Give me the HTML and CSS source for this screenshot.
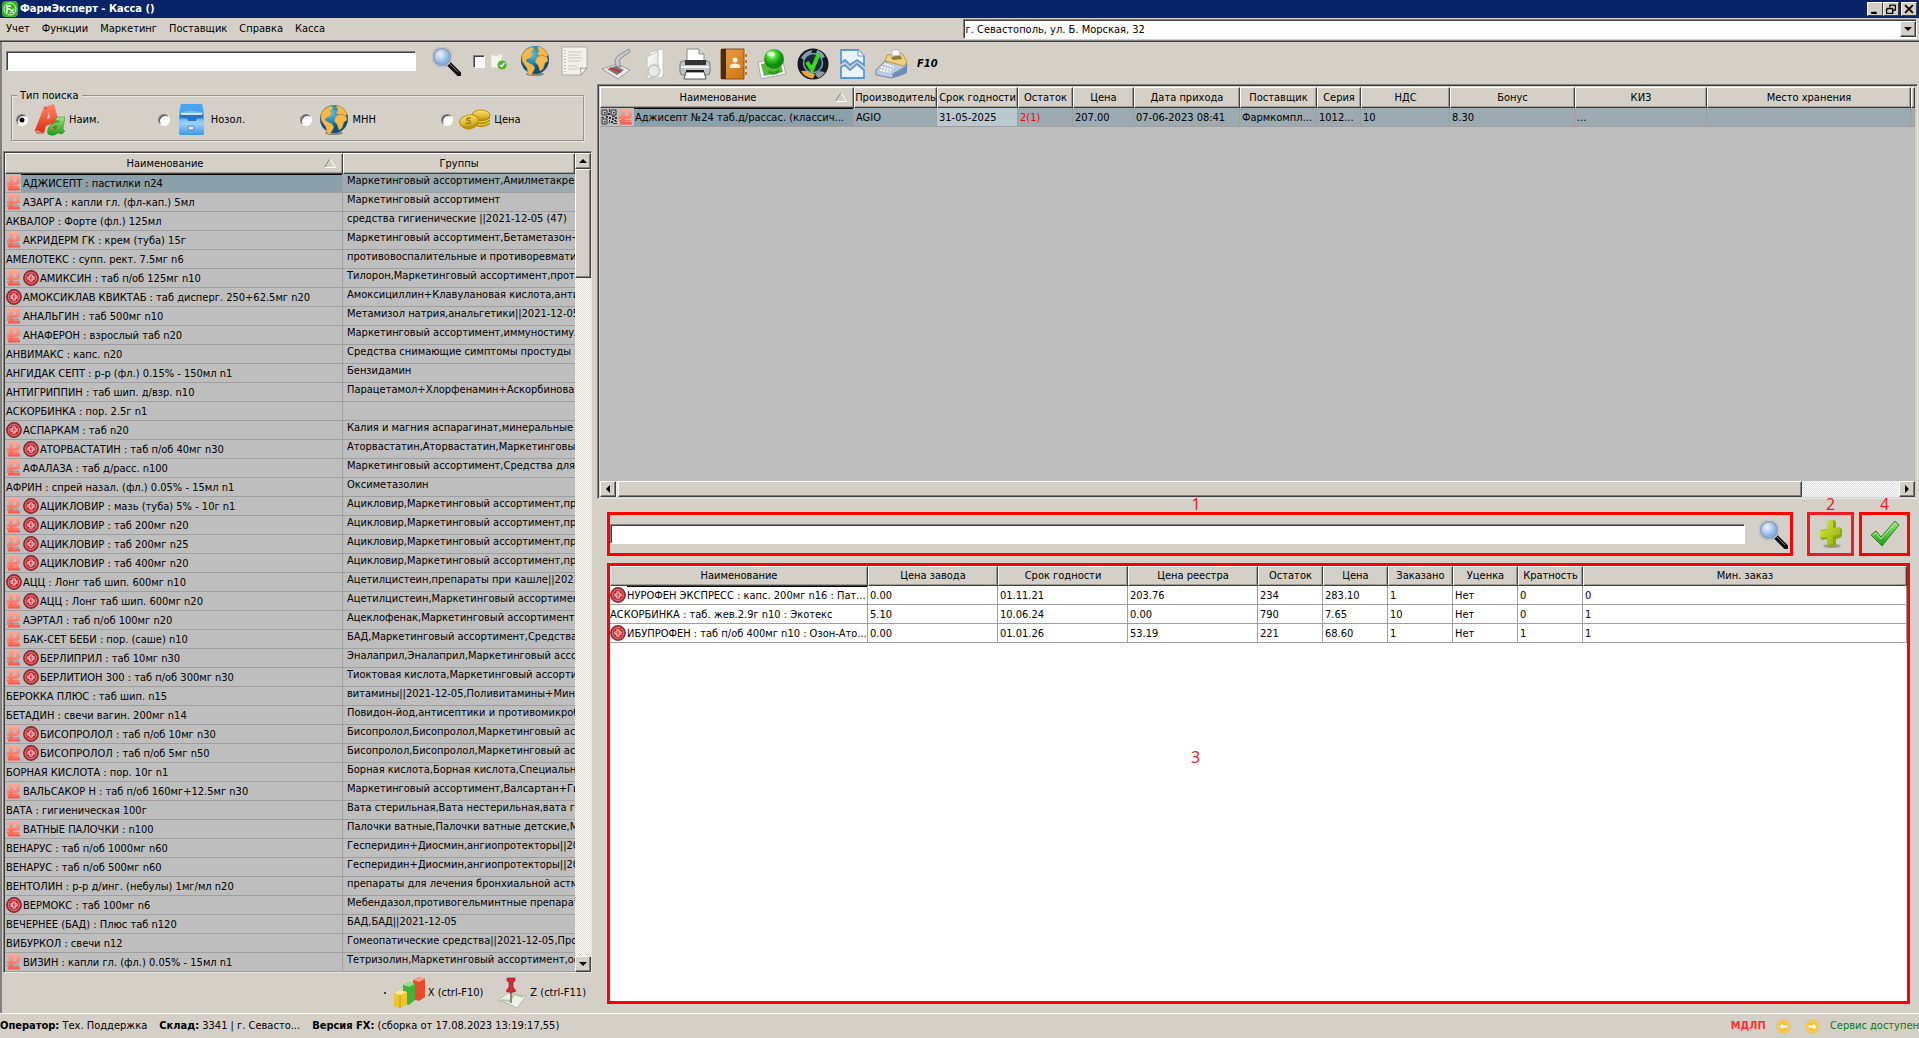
FILE: index.html
```html
<!DOCTYPE html>
<html lang="ru">
<head>
<meta charset="utf-8">
<title>ФармЭксперт - Касса ()</title>
<link rel="stylesheet" href="styles.css">
</head>
<body>
<svg class="sprite" aria-hidden="true">
  <defs>
    <linearGradient id="gGreen" x2="0" y2="1"><stop offset="0" stop-color="#9be87a"/><stop offset="1" stop-color="#1d9a14"/></linearGradient>
    <linearGradient id="gRed" x2="0" y2="1"><stop offset="0" stop-color="#ff8a66"/><stop offset="1" stop-color="#e02a14"/></linearGradient>
    <linearGradient id="gRub" x2="0" y2="1"><stop offset="0" stop-color="#ffab98"/><stop offset="1" stop-color="#f4594c"/></linearGradient>
    <linearGradient id="gBlue" x2="0" y2="1"><stop offset="0" stop-color="#7cc4f8"/><stop offset=".3" stop-color="#3f9cf0"/><stop offset=".45" stop-color="#a8dcff"/><stop offset="1" stop-color="#3c96ea"/></linearGradient>
    <linearGradient id="gGold" x2="0" y2="1"><stop offset="0" stop-color="#fbe66a"/><stop offset="1" stop-color="#c79d12"/></linearGradient>
    <linearGradient id="gOrange" x2="1" y2="1"><stop offset="0" stop-color="#e8a048"/><stop offset="1" stop-color="#cf7414"/></linearGradient>
    <linearGradient id="gPaper" x2="1" y2="1"><stop offset="0" stop-color="#fff"/><stop offset="1" stop-color="#d8d8d4"/></linearGradient>
    <linearGradient id="gLime" x2="1" y2="1"><stop offset="0" stop-color="#d9ec3c"/><stop offset="1" stop-color="#8fae0c"/></linearGradient>
    <radialGradient id="gSea" cx=".4" cy=".3"><stop offset="0" stop-color="#5cc4ec"/><stop offset=".6" stop-color="#1c86bc"/><stop offset="1" stop-color="#0b4f7c"/></radialGradient>
    <radialGradient id="gLens" cx=".4" cy=".35"><stop offset="0" stop-color="#eaf4ff"/><stop offset="1" stop-color="#86b0e4"/></radialGradient>
    <radialGradient id="gOrb" cx=".4" cy=".3"><stop offset="0" stop-color="#c8ffb0"/><stop offset=".5" stop-color="#3fd22c"/><stop offset="1" stop-color="#138a10"/></radialGradient>
  </defs>
  <symbol id="rub" viewBox="0 0 17 16"><path fill-rule="evenodd" d="M3 0h8q3 0 3 3v3q0 4-4 4H7v1h6v1.500H7V13h7v2.500H2V13h1v-.5H1V11h2v-1H1V7h2V3H2zM7 3v4h2q1.500 0 1.500-2T9 3z" fill="url(#gRub)"/></symbol>
  <symbol id="med" viewBox="0 0 17 16"><circle cx="8" cy="8" r="7.300" fill="#c8303a" stroke="#7a2a2e" stroke-width="1.200"/><circle cx="8" cy="8" r="5.500" fill="#c4202c" stroke="#d89a9a" stroke-width=".8"/><path d="M8 4.500v7M4.500 8h7" stroke="#fff" stroke-width="3"/><path d="M8 5v6M5 8h6" stroke="#d81e28" stroke-width="1.200"/></symbol>
  <symbol id="qr" viewBox="0 0 17 16"><path d="M1 1h5v5H1zM10 1h5v5h-5zM1 10h5v5H1z" fill="none" stroke="#333"/><path d="M3 3h1.500v1.500H3zM12 3h1.500v1.500H12zM3 12h1.500v1.500H3zM8 0h1v3H8zM7 4h2v2H7zM0 8h3v1H0zM5 7h2v2H5zM8 8h2v2H8zM11 7h3v1h-3zM14 8h2v2h-2zM11 9h2v2h-2zM8 11h1v3H8zM10 12h2v2h-2zM13 11h2v1h-2zM12 14h4v1h-4zM14 12h2v1h-2z" fill="#333"/></symbol>
  <symbol id="lens" viewBox="0 0 30 30"><path d="M18 18l10 10" stroke="#111" stroke-width="5" stroke-linecap="round"/><path d="M18 17l9 9" stroke="#777" stroke-width="1"/><circle cx="11" cy="11" r="9" fill="url(#gLens)" stroke="#8d97a6" stroke-width="2.500"/><circle cx="11" cy="11" r="9.500" fill="none" stroke="#dfe4ec" stroke-width=".8"/></symbol>
  <symbol id="globe" viewBox="0 0 30 32"><ellipse cx="15" cy="29" rx="9" ry="2" fill="#000" opacity=".35"/><circle cx="15" cy="15" r="14" fill="url(#gSea)"/><path d="M2 10q4-7 10-8l2 1-1 3-2 1 2 2-3 4-3 1-1 2 3 2 4 2 2 3-2 4-3 4-2-3-1-5-3-4-2-4zM17 2l4 0q5 3 7 8l-2 2-3-2-3 1-3-2 2-3zM17 12l5-2 5 2 1 4-3 2-2 6-3 2-2-6-3-3z" fill="#f4b84e" stroke="#c98a28" stroke-width=".5"/></symbol>
  <symbol id="note" viewBox="0 0 27 30"><path d="M1 1h25v21l-6 7H1z" fill="#f2f0ec" stroke="#b0aaa2"/><path d="M20 29q0-5-1-7 4 1 7 0z" fill="#fff" stroke="#9a948c"/><path d="M7 6h14M7 9h12M7 12h14M7 15h12M7 20h9M7 23h10" stroke="#cdc6ba"/><path d="M4 4v23" stroke="#8c8479" stroke-dasharray="1 2"/></symbol>
  <symbol id="clip" viewBox="0 0 17 18"><path d="M1 3l11-1v13l-11 1z" fill="#f6f5ee" stroke="#e3d9b8"/><path d="M4 1h5v3H4z" fill="#d7d7d2"/><circle cx="12" cy="13" r="4.500" fill="#4bb52c"/><path d="M10 13l1.500 1.500L14.500 11" fill="none" stroke="#fff" stroke-width="1.500"/></symbol>
  <symbol id="aa" viewBox="0 0 32 32"><path d="M1 26L10 3l10-3 6 22-6 4-3-6-5 2-2 7zM13 15l3-1-1-6z" fill="url(#gRed)"/><path d="M1 26l2 3 7 0M10 3l3 2" fill="none" stroke="#c83420"/><path d="M28 13l3 0-2 11q0 3 2 3l-3 3-4-1q-5 4-10 1-2-6 4-10 4-3 8-2 0-2-4-1l-1-2q3-3 7-2zM23 22q-5 0-5 4 3 1 5-4z" fill="url(#gGreen)" stroke="#1f8a1a" stroke-width=".5"/></symbol>
  <symbol id="box" viewBox="0 0 28 32"><path d="M3 0h21l2 9H1z" fill="#4aa4f2"/><path d="M1 9q13-4 25 0v21q0 1-2 1H3q-2 0-2-1z" fill="url(#gBlue)"/><path d="M2 10h23v4h-6l-1 3h-8l-1-3H2z" fill="#2a74c4"/><path d="M3 10h21" stroke="#fff" stroke-width="1.500"/><path d="M1 18h25" stroke="#7cc0f6"/><rect x="10" y="22" width="6" height="4" rx="1" fill="#dce9f4" stroke="#6e7f92"/></symbol>
  <symbol id="coins" viewBox="0 0 32 32"><path d="M13 10v9q9 8 18 1v-9z" fill="#b8900c"/><ellipse cx="22" cy="11" rx="9" ry="5" fill="url(#gGold)" stroke="#b58c10"/><path d="M14 15q8 6 17 0M14 18q8 6 17 0" fill="none" stroke="#f6dc50"/><path d="M1 17v4q8 9 18 0v-5z" fill="#b8900c"/><ellipse cx="10" cy="17" rx="9.500" ry="6" transform="rotate(-12 10 17)" fill="url(#gGold)" stroke="#b58c10"/><path d="M12 14q-5-1-4 2 4 0 3 3-2 1-4 0" fill="none" stroke="#a87f0c" stroke-width="1.500"/></symbol>
  <symbol id="scan" viewBox="0 0 32 32"><path d="M1 21l15-5 13 6-12 9z" fill="#e9e9ea" stroke="#9b9b9e"/><path d="M6 21l9-3 8 4-7 5z" fill="#777"/><path d="M9 20l11 4" stroke="#d22" stroke-width="1.500"/><path d="M15 18Q12 11 18 7L28 1l1 3-9 6q-3 3 0 9z" fill="#c4c9cc" stroke="#888e92"/></symbol>
  <symbol id="folder" viewBox="0 0 24 32"><path d="M6 4l13-3v28L6 31z" fill="#fff" stroke="#c4c4c2"/><path d="M3 9l11-6v24L3 31z" fill="url(#gPaper)" stroke="#c0c0be"/><circle cx="10" cy="23" r="6" fill="#e8e8e6" fill-opacity=".7" stroke="#aaa"/></symbol>
  <symbol id="printer" viewBox="0 0 32 32"><path d="M8 1h12l5 5v9H8z" fill="#fff" stroke="#888"/><path d="M20 1v5h5" fill="#ddd" stroke="#888"/><rect x="1" y="13" width="30" height="14" rx="3" fill="#bfc2c4" stroke="#77797b"/><path d="M6 12h21v5H6z" fill="#333"/><path d="M2 19h28" stroke="#f2f2f2" stroke-width="2"/><path d="M7 24h18l2 7H5z" fill="#fff" stroke="#555"/><path d="M7 23h18" stroke="#222" stroke-width="2"/></symbol>
  <symbol id="book" viewBox="0 0 28 32"><path d="M3 1h23v30H3z" fill="#e9dcc8"/><path d="M1 2q0-1 1-1h22v30H2q-1 0-1-1z" fill="url(#gOrange)" stroke="#8a4c10"/><path d="M1 1h5v30H1z" fill="#4a2c16"/><circle cx="15" cy="12" r="2.500" fill="#fdf3e0"/><path d="M10 20v-3q5-3 10 0v3z" fill="#fdf3e0"/><path d="M26 6v3M26 12v3M26 18v3M26 24v3" stroke="#c07a2c" stroke-width="2"/></symbol>
  <symbol id="orb" viewBox="0 0 30 32"><path d="M1 14l24-4 4 16-25 5z" fill="#f4f4f2" stroke="#a9aaa6"/><path d="M4 16l19-3 3 11-19 4z" fill="#58b83c"/><circle cx="17" cy="11" r="10" fill="url(#gOrb)"/><path d="M12 22q5 4 10-1l1 3q-6 5-12 1z" fill="#2c9a1c"/><ellipse cx="14" cy="6" rx="4" ry="2.500" fill="#fff" opacity=".6"/></symbol>
  <symbol id="check-orb" viewBox="0 0 34 32"><circle cx="17" cy="16" r="15.500" fill="#15181c"/><path d="M5 23q4 7 12 7.500l2-4-6-4z" fill="#f2a23c"/><path d="M5 10q4-7 11-8l-1 4q-5 1-7 6z" fill="#8f9ba6"/><path d="M29 9q-3-6-8-7l-1 4q3 2 4 5zM29 24q-2 4-7 6l-3-4 4-3z" fill="#8f9ba6"/><circle cx="17" cy="15" r="9.500" fill="#1c2c34" stroke="#6f9cc4" stroke-width="1.500"/><path d="M11 14l5 8L23 5" fill="none" stroke="#38d81c" stroke-width="4"/></symbol>
  <symbol id="torn" viewBox="0 0 27 32"><path d="M2 2h17l6 6v9l-7-5-7 5-5-5-4 3z" fill="#e9f3fd" stroke="#5a96dc" stroke-width="1.800"/><path d="M19 2v6h6" fill="#fff" stroke="#5a96dc"/><path d="M2 19l4-2 5 5 7-6 7 6v8H2z" fill="#e9f3fd" stroke="#5a96dc" stroke-width="1.800"/></symbol>
  <symbol id="cash" viewBox="0 0 34 30"><path d="M1 21l9-9 22 3-1 9-14 5-16-3z" fill="#b9cbe0" stroke="#7088a6"/><path d="M17 25l15-9v8l-14 5z" fill="#6f8db2"/><path d="M12 6l15-2 5 9-3 4-19-5z" fill="#ecd27c" stroke="#b99a40"/><path d="M16 8l9-2 2 4-9 1z" fill="#8d7a3c"/><path d="M17 1h7l1 5-8 1z" fill="#fff" stroke="#bbb"/><path d="M6 18l11 3M9 15l10 3M5 21l10 2" stroke="#fff" stroke-width="1.800" stroke-dasharray="2 1"/></symbol>
  <symbol id="plus" viewBox="0 0 28 30"><ellipse cx="15" cy="27" rx="9" ry="2" fill="#000" opacity=".25"/><path d="M11 2l6-1 2 2v7l5-1 1 2v6l-2 2-4 1v7l-6 1-2-2v-6l-6 1-2-2v-6l2-2 6-1z" fill="#8aa80c"/><path d="M10 2l6-1v8l7-1v7l-7 2v8l-6 1v-8l-7 1v-7l7-1z" fill="url(#gLime)"/></symbol>
  <symbol id="tick" viewBox="0 0 30 28"><path d="M1 15l5-4 5 6L25 1l4 4L12 26z" fill="url(#gGreen)" stroke="#2b8a24"/><path d="M3 15l3-2 5 6L25 3" fill="none" stroke="#b6f29c"/></symbol>
  <symbol id="bars" viewBox="0 0 32 32"><path d="M20 3l6-3 6 2v18l-6 4-6-2z" fill="#e8492c"/><path d="M20 3l6-3 6 2-6 3z" fill="#ff9a80"/><path d="M10 8l6-3 6 2v16l-6 5-6-2z" fill="#45b13a"/><path d="M10 8l6-3 6 2-6 3z" fill="#93e07e"/><path d="M1 16l6-3 7 2v12l-7 4-6-2z" fill="#f0c42c"/><path d="M1 16l6-3 7 2-7 3z" fill="#fdec94"/><path d="M7 18v13" stroke="#c99a14"/></symbol>
  <symbol id="pin" viewBox="0 0 30 32"><path d="M1 23l10-7 18 3-9 12-8-4z" fill="#eef0ea" stroke="#b4b8ac"/><path d="M4 23l9 1 4-7 9 3" fill="none" stroke="#b4c8a8" stroke-width="2"/><path d="M14 15v11" stroke="#888" stroke-width="2"/><path d="M10 1h8v3l-2 1v5l3 4q-5 3-10 0l3-4V5l-2-1z" fill="#cf2c34" stroke="#8f161e" stroke-width=".6"/></symbol>
  <symbol id="sort" viewBox="0 0 12 10"><path d="M6 .5L.5 9.500" stroke="#848078" fill="none"/><path d="M6 .5l5.500 9H.5" stroke="#fff" fill="none"/></symbol>
</svg>

<header class="titlebar">
  <svg class="logo" viewBox="0 0 16 16"><rect width="16" height="16" rx="4" fill="#35b41c"/><circle cx="8" cy="8" r="6" fill="none" stroke="#d8f5d0"/><path d="M5 12V5h4M5 8h3M8 8l4 4M12 8l-4 4" fill="none" stroke="#fff" stroke-width="1.300"/></svg>
  <h1>ФармЭксперт - Касса ()</h1>
  <div class="winbtns">
    <button aria-label="Свернуть"><svg viewBox="0 0 9 9"><path d="M1 8h5" stroke="#000" stroke-width="2"/></svg></button>
    <button aria-label="Восстановить"><svg viewBox="0 0 9 9"><path d="M3 1h5.500M3.500 1v2M8.500 1v4.500H6M.5 4h5.500M.5 4v4.500H6V4" fill="none" stroke="#000" stroke-width="1.300"/></svg></button>
    <button class="close" aria-label="Закрыть"><svg viewBox="0 0 9 9"><path d="M1 1l7 7M8 1L1 8" stroke="#000" stroke-width="1.700"/></svg></button>
  </div>
</header>

<div class="menubar">
  <nav><a href="#">Учет</a><a href="#">Функции</a><a href="#">Маркетинг</a><a href="#">Поставщик</a><a href="#">Справка</a><a href="#">Касса</a></nav>
  <div class="combo">
    <select aria-label="Адрес аптеки"><option>г. Севастополь, ул. Б. Морская, 32</option></select>
    <span class="sb drop"><i class="down"></i></span>
  </div>
</div>

<main>
  <section class="left">
    <div class="search">
      <input class="field" type="text" aria-label="Поиск">
      <button class="ico" aria-label="Найти"><svg width="30" height="30"><use href="#lens"/></svg></button>
      <label class="flag"><input type="checkbox" aria-label="Только в наличии"><svg width="17" height="18"><use href="#clip"/></svg></label>
      <button class="ico" aria-label="Интернет"><svg width="30" height="32"><use href="#globe"/></svg></button>
      <button class="ico" aria-label="Заметки"><svg width="27" height="30"><use href="#note"/></svg></button>
    </div>
    <fieldset>
      <legend>Тип поиска</legend>
      <label><input type="radio" name="kind" checked><svg width="32" height="32"><use href="#aa"/></svg>Наим.</label>
      <label><input type="radio" name="kind"><svg width="32" height="32"><use href="#box"/></svg>Нозол.</label>
      <label><input type="radio" name="kind"><svg width="32" height="32"><use href="#globe"/></svg>МНН</label>
      <label><input type="radio" name="kind"><svg width="32" height="32"><use href="#coins"/></svg>Цена</label>
    </fieldset>
    <div class="list">
      <table class="goods">
        <colgroup><col class="w338"><col></colgroup>
        <thead><tr><th class="sorted"><span>Наименование</span><svg><use href="#sort"/></svg></th><th><span>Группы</span></th></tr></thead>
        <tbody>
<tr class="sel"><td><svg><use href="#rub"/></svg>АДЖИСЕПТ : пастилки n24</td><td>Маркетинговый ассортимент,Амилметакрезол</td></tr>
<tr><td><svg><use href="#rub"/></svg>АЗАРГА : капли гл. (фл-кап.) 5мл</td><td>Маркетинговый ассортимент</td></tr>
<tr><td>АКВАЛОР : Форте (фл.) 125мл</td><td>средства гигиенические ||2021-12-05 (47)</td></tr>
<tr><td><svg><use href="#rub"/></svg>АКРИДЕРМ ГК : крем (туба) 15г</td><td>Маркетинговый ассортимент,Бетаметазон+Г</td></tr>
<tr><td>АМЕЛОТЕКС : супп. рект. 7.5мг n6</td><td>противовоспалительные и противоревматич</td></tr>
<tr><td><svg><use href="#rub"/></svg><svg><use href="#med"/></svg>АМИКСИН : таб п/об 125мг n10</td><td>Тилорон,Маркетинговый ассортимент,проти</td></tr>
<tr><td><svg><use href="#med"/></svg>АМОКСИКЛАВ КВИКТАБ : таб дисперг. 250+62.5мг n20</td><td>Амоксициллин+Клавулановая кислота,антиб</td></tr>
<tr><td><svg><use href="#rub"/></svg>АНАЛЬГИН : таб 500мг n10</td><td>Метамизол натрия,анальгетики||2021-12-05</td></tr>
<tr><td><svg><use href="#rub"/></svg>АНАФЕРОН : взрослый таб n20</td><td>Маркетинговый ассортимент,иммуностимуля</td></tr>
<tr><td>АНВИМАКС : капс. n20</td><td>Средства снимающие симптомы простуды и</td></tr>
<tr><td>АНГИДАК СЕПТ : р-р (фл.) 0.15% - 150мл n1</td><td>Бензидамин</td></tr>
<tr><td>АНТИГРИППИН : таб шип. д/взр. n10</td><td>Парацетамол+Хлорфенамин+Аскорбиновая</td></tr>
<tr><td>АСКОРБИНКА : пор. 2.5г n1</td><td></td></tr>
<tr><td><svg><use href="#med"/></svg>АСПАРКАМ : таб n20</td><td>Калия и магния аспарагинат,минеральные д</td></tr>
<tr><td><svg><use href="#rub"/></svg><svg><use href="#med"/></svg>АТОРВАСТАТИН : таб п/об 40мг n30</td><td>Аторвастатин,Аторвастатин,Маркетинговы</td></tr>
<tr><td><svg><use href="#rub"/></svg>АФАЛАЗА : таб д/расс. n100</td><td>Маркетинговый ассортимент,Средства для</td></tr>
<tr><td>АФРИН : спрей назал. (фл.) 0.05% - 15мл n1</td><td>Оксиметазолин</td></tr>
<tr><td><svg><use href="#rub"/></svg><svg><use href="#med"/></svg>АЦИКЛОВИР : мазь (туба) 5% - 10г n1</td><td>Ацикловир,Маркетинговый ассортимент,про</td></tr>
<tr><td><svg><use href="#rub"/></svg><svg><use href="#med"/></svg>АЦИКЛОВИР : таб 200мг n20</td><td>Ацикловир,Маркетинговый ассортимент,про</td></tr>
<tr><td><svg><use href="#rub"/></svg><svg><use href="#med"/></svg>АЦИКЛОВИР : таб 200мг n25</td><td>Ацикловир,Маркетинговый ассортимент,про</td></tr>
<tr><td><svg><use href="#rub"/></svg><svg><use href="#med"/></svg>АЦИКЛОВИР : таб 400мг n20</td><td>Ацикловир,Маркетинговый ассортимент,про</td></tr>
<tr><td><svg><use href="#med"/></svg>АЦЦ : Лонг таб шип. 600мг n10</td><td>Ацетилцистеин,препараты при кашле||2021</td></tr>
<tr><td><svg><use href="#rub"/></svg><svg><use href="#med"/></svg>АЦЦ : Лонг таб шип. 600мг n20</td><td>Ацетилцистеин,Маркетинговый ассортимент</td></tr>
<tr><td><svg><use href="#rub"/></svg>АЭРТАЛ : таб п/об 100мг n20</td><td>Ацеклофенак,Маркетинговый ассортимент,н</td></tr>
<tr><td><svg><use href="#rub"/></svg>БАК-СЕТ БЕБИ : пор. (саше) n10</td><td>БАД,Маркетинговый ассортимент,Средства</td></tr>
<tr><td><svg><use href="#rub"/></svg><svg><use href="#med"/></svg>БЕРЛИПРИЛ : таб 10мг n30</td><td>Эналаприл,Эналаприл,Маркетинговый ассор</td></tr>
<tr><td><svg><use href="#rub"/></svg><svg><use href="#med"/></svg>БЕРЛИТИОН 300 : таб п/об 300мг n30</td><td>Тиоктовая кислота,Маркетинговый ассорти</td></tr>
<tr><td>БЕРОККА ПЛЮС : таб шип. n15</td><td>витамины||2021-12-05,Поливитамины+Мине</td></tr>
<tr><td>БЕТАДИН : свечи вагин. 200мг n14</td><td>Повидон-йод,антисептики и противомикроб</td></tr>
<tr><td><svg><use href="#rub"/></svg><svg><use href="#med"/></svg>БИСОПРОЛОЛ : таб п/об 10мг n30</td><td>Бисопролол,Бисопролол,Маркетинговый асс</td></tr>
<tr><td><svg><use href="#rub"/></svg><svg><use href="#med"/></svg>БИСОПРОЛОЛ : таб п/об 5мг n50</td><td>Бисопролол,Бисопролол,Маркетинговый асс</td></tr>
<tr><td>БОРНАЯ КИСЛОТА : пор. 10г n1</td><td>Борная кислота,Борная кислота,Специальны</td></tr>
<tr><td><svg><use href="#rub"/></svg>ВАЛЬСАКОР Н : таб п/об 160мг+12.5мг n30</td><td>Маркетинговый ассортимент,Валсартан+Ги,</td></tr>
<tr><td>ВАТА : гигиеническая 100г</td><td>Вата стерильная,Вата нестерильная,вата ги</td></tr>
<tr><td><svg><use href="#rub"/></svg>ВАТНЫЕ ПАЛОЧКИ : n100</td><td>Палочки ватные,Палочки ватные детские,М</td></tr>
<tr><td>ВЕНАРУС : таб п/об 1000мг n60</td><td>Гесперидин+Диосмин,ангиопротекторы||20</td></tr>
<tr><td>ВЕНАРУС : таб п/об 500мг n60</td><td>Гесперидин+Диосмин,ангиопротекторы||20</td></tr>
<tr><td>ВЕНТОЛИН : р-р д/инг. (небулы) 1мг/мл n20</td><td>препараты для лечения бронхиальной астмы</td></tr>
<tr><td><svg><use href="#med"/></svg>ВЕРМОКС : таб 100мг n6</td><td>Мебендазол,противогельминтные препарат</td></tr>
<tr><td>ВЕЧЕРНЕЕ (БАД) : Плюс таб n120</td><td>БАД,БАД||2021-12-05</td></tr>
<tr><td>ВИБУРКОЛ : свечи n12</td><td>Гомеопатические средства||2021-12-05,Про</td></tr>
<tr><td><svg><use href="#rub"/></svg>ВИЗИН : капли гл. (фл.) 0.05% - 15мл n1</td><td>Тетризолин,Маркетинговый ассортимент,оф</td></tr>
        </tbody>
      </table>
      <div class="vscroll"><span class="sb"><i class="up"></i></span><span class="thumb"></span><span class="sb end"><i class="down"></i></span></div>
    </div>
    <div class="reports">
      <span class="dot"></span>
      <button class="ico"><svg width="32" height="32"><use href="#bars"/></svg>X (ctrl-F10)</button>
      <button class="ico"><svg width="30" height="32"><use href="#pin"/></svg>Z (ctrl-F11)</button>
    </div>
  </section>

  <section class="right">
    <div class="tools">
      <button class="ico" aria-label="Сканер"><svg width="32" height="32"><use href="#scan"/></svg></button>
      <button class="ico" aria-label="Папка"><svg width="28" height="32"><use href="#folder"/></svg></button>
      <button class="ico" aria-label="Печать"><svg width="32" height="32"><use href="#printer"/></svg></button>
      <button class="ico" aria-label="Контакты"><svg width="28" height="32"><use href="#book"/></svg></button>
      <button class="ico" aria-label="Обмен"><svg width="30" height="32"><use href="#orb"/></svg></button>
      <button class="ico" aria-label="Проверка"><svg width="34" height="32"><use href="#check-orb"/></svg></button>
      <button class="ico" aria-label="Разделить чек"><svg width="27" height="32"><use href="#torn"/></svg></button>
      <button class="ico f10"><svg width="34" height="30"><use href="#cash"/></svg>F10</button>
    </div>
    <div class="stock">
      <div class="stock-body">
      <table>
        <colgroup><col class="w254"><col class="w83"><col class="w81"><col class="w55"><col class="w61"><col class="w106"><col class="w77"><col class="w44"><col class="w89"><col class="w125"><col class="w132"><col><col class="w4"></colgroup>
        <thead><tr><th class="sorted"><span>Наименование</span><svg><use href="#sort"/></svg></th><th><span>Производитель</span></th><th><span>Срок годности</span></th><th><span>Остаток</span></th><th><span>Цена</span></th><th><span>Дата прихода</span></th><th><span>Поставщик</span></th><th><span>Серия</span></th><th><span>НДС</span></th><th><span>Бонус</span></th><th><span>КИЗ</span></th><th><span>Место хранения</span></th><th></th></tr></thead>
        <tbody><tr class="sel"><td><svg><use href="#qr"/></svg><svg><use href="#rub"/></svg>Аджисепт №24 таб.д/рассас. (классич...</td><td>AGIO</td><td class="date">31-05-2025</td><td class="red">2(1)</td><td>207.00</td><td>07-06-2023 08:41</td><td>Фармкомпл...</td><td>1012...</td><td>10</td><td>8.30</td><td>...</td><td></td><td></td></tr></tbody>
      </table>
      </div>
      <div class="hscroll"><span class="sb"><i class="lt"></i></span><span class="thumb"></span><span class="sb end"><i class="rt"></i></span></div>
    </div>
    <div class="order">
      <div class="order-bar">
        <div class="marked grow"><b class="num">1</b><input class="field" type="text" aria-label="Поиск товара для заказа"><button class="ico" aria-label="Найти товар"><svg width="30" height="30"><use href="#lens"/></svg></button></div>
        <div class="marked add"><b class="num">2</b><button class="ico" aria-label="Добавить"><svg width="28" height="30"><use href="#plus"/></svg></button></div>
        <div class="marked ok"><b class="num">4</b><button class="ico" aria-label="Подтвердить"><svg width="30" height="28"><use href="#tick"/></svg></button></div>
      </div>
      <div class="order-list">
        <table>
          <colgroup><col class="w258"><col class="w130"><col class="w130"><col class="w130"><col class="w65"><col class="w65"><col class="w65"><col class="w65"><col class="w65"><col></colgroup>
          <thead><tr><th><span>Наименование</span></th><th><span>Цена завода</span></th><th><span>Срок годности</span></th><th><span>Цена реестра</span></th><th><span>Остаток</span></th><th><span>Цена</span></th><th><span>Заказано</span></th><th><span>Уценка</span></th><th><span>Кратность</span></th><th><span>Мин. заказ</span></th></tr></thead>
          <tbody>
            <tr class="focus"><td><svg><use href="#med"/></svg>НУРОФЕН ЭКСПРЕСС : капс. 200мг n16 : Пат...</td><td>0.00</td><td>01.11.21</td><td>203.76</td><td>234</td><td>283.10</td><td>1</td><td>Нет</td><td>0</td><td>0</td></tr>
            <tr><td>АСКОРБИНКА : таб. жев.2.9г n10 : Экотекс</td><td>5.10</td><td>10.06.24</td><td>0.00</td><td>790</td><td>7.65</td><td>10</td><td>Нет</td><td>0</td><td>1</td></tr>
            <tr><td><svg><use href="#med"/></svg>ИБУПРОФЕН : таб п/об 400мг n10 : Озон-Ато...</td><td>0.00</td><td>01.01.26</td><td>53.19</td><td>221</td><td>68.60</td><td>1</td><td>Нет</td><td>1</td><td>1</td></tr>
          </tbody>
        </table>
        <b class="num big">3</b>
      </div>
    </div>
  </section>
</main>

<footer>
  <span><b>Оператор:</b> Тех. Поддержка</span>
  <span><b>Склад:</b> 3341 | г. Севасто...</span>
  <span><b>Версия FX:</b> (сборка от 17.08.2023 13:19:17,55)</span>
  <div class="service">
    <b>МДЛП</b>
    <svg width="15" height="15" viewBox="0 0 15 15"><circle cx="7.500" cy="7.500" r="7" fill="#f0c040"/><circle cx="7.500" cy="7.500" r="5.500" fill="none" stroke="#f8d878"/><path d="M3.500 7.500l3-3v2h5v2h-5v2z" fill="#fff"/></svg>
    <svg width="15" height="15" viewBox="0 0 15 15"><circle cx="7.500" cy="7.500" r="7" fill="#f0c040"/><circle cx="7.500" cy="7.500" r="5.500" fill="none" stroke="#f8d878"/><path d="M11.500 7.500l-3-3v2h-5v2h5v2z" fill="#fff"/></svg>
    <em>Сервис доступен</em>
  </div>
</footer>
</body>
</html>
```
FILE: styles.css
```css
:root {
  --face: #d4d0c8;
  --dark: #404040;
  --mid: #808080;
  --list: #bebebe;
  --rule: #9f9f9f;
}
* { box-sizing: border-box; }
body {
  margin: 0;
  min-height: 100vh;
  display: flex;
  flex-direction: column;
  background: var(--face);
  color: #000;
  font: 11px/16px "DejaVu Sans Condensed", "DejaVu Sans", sans-serif;
  overflow-x: hidden;
}
input, select, button { font: inherit; color: inherit; margin: 0; }
svg { display: block; flex: none; }
.sprite { position: absolute; width: 0; height: 0; }

/* title bar */
.titlebar {
  height: 18px;
  display: flex;
  align-items: center;
  gap: 2px;
  padding: 0 2px;
  background: #0a246a;
  color: #fff;
}
.logo { width: 16px; height: 16px; }
h1 { margin: 0; font-size: 11px; font-weight: bold; flex: 1; }
.winbtns { display: flex; }
.winbtns button {
  width: 16px;
  height: 14px;
  padding: 1px 2px;
  background: var(--face);
  border: 1px solid;
  border-color: #fff var(--dark) var(--dark) #fff;
}
.winbtns svg { width: 10px; height: 10px; }
.winbtns .close { margin-left: 2px; }

/* menu */
.menubar {
  height: 24px;
  display: flex;
  justify-content: space-between;
  border-bottom: 1px solid var(--dark);
  box-shadow: inset 0 -1px var(--mid);
}
nav { display: flex; gap: 12px; padding: 3px 6px; }
nav a { color: inherit; text-decoration: none; }
.combo { position: relative; width: 50%; padding: 1px 2px 2px 3px; }
select {
  appearance: none;
  width: 100%;
  height: 20px;
  padding: 2px 2px 0;
  background: #fff;
  border: 1px solid;
  border-color: var(--mid) #fff #fff var(--mid);
  border-radius: 0;
  box-shadow: inset 1px 1px var(--dark);
}
.drop { position: absolute; top: 3px; right: 3px; pointer-events: none; }

/* scroll pieces */
.sb, .thumb {
  background: var(--face);
  border: 1px solid;
  border-color: #fff var(--dark) var(--dark) #fff;
  box-shadow: inset -1px -1px var(--mid);
}
.sb { width: 16px; height: 16px; display: flex; align-items: center; justify-content: center; flex: none; }
.sb i { border: 4px solid transparent; }
.sb .down { border-top-color: #000; border-bottom: 0; }
.sb .up { border-bottom-color: #000; border-top: 0; }
.sb .lt { border-right-color: #000; border-left: 0; }
.sb .rt { border-left-color: #000; border-right: 0; }
.end { margin: auto 0 0; }
.vscroll, .hscroll { display: flex; background: repeating-conic-gradient(#fff 0 25%, #dedbd4 0 50%) 0 0 / 2px 2px; }
.vscroll { flex-direction: column; width: 16px; }
.vscroll .thumb { height: 109px; }
.hscroll { height: 16px; gap: 2px; }
.hscroll .thumb { width: 90%; }
.hscroll .end { margin: 0 0 0 auto; }

main { flex: 1; display: grid; grid-template-columns: 597px minmax(0, 1fr); border-bottom: 1px solid #fff; }
.ico {
  display: flex;
  align-items: center;
  padding: 0;
  border: 0;
  background: none;
}
.field {
  flex: 1;
  min-width: 0;
  height: 20px;
  background: #fff;
  border: 1px solid;
  border-color: var(--mid) #fff #fff var(--mid);
  box-shadow: inset 1px 1px var(--dark);
}

/* left panel */
.left { border-left: 2px solid var(--mid); display: flex; flex-direction: column; }
.search { display: flex; align-items: center; height: 38px; padding: 0 9px 0 4px; }
.search .field { margin-right: 15px; }
.flag { display: flex; align-items: center; gap: 5px; margin: 0 13px 0 12px; }
.flag + .ico { margin-right: 11px; }
[type="checkbox"], [type="radio"] {
  appearance: none;
  width: 12px;
  height: 13px;
  background: #fff;
  border: 1px solid;
  border-color: var(--mid) #fff #fff var(--mid);
  box-shadow: inset 1px 1px var(--dark);
}
[type="radio"] { border-radius: 50%; height: 12px; margin-right: 6px; }
[type="radio"]:checked { background: radial-gradient(#000 2px, #fff 3px); }
fieldset {
  display: grid;
  grid-template-columns: repeat(4, 1fr);
  height: 54px;
  margin: 8px 12px 9px 9px;
  padding: 0 0 0 3px;
  border: 2px groove #e8e6e0;
  min-width: 0;
}
legend { padding: 0 3px; margin-left: 1px; }
fieldset label { display: flex; align-items: center; height: 32px; }
fieldset svg { margin-right: 3px; }

table { width: 100%; table-layout: fixed; border-collapse: separate; border-spacing: 0; }
th {
  height: 21px;
  padding: 0;
  font-weight: normal;
  background: var(--face);
  border: 1px solid;
  border-color: #fff var(--dark) var(--dark) #fff;
  box-shadow: inset -1px -1px #a09c94;
  position: relative;
}
th span { display: flex; justify-content: center; overflow: hidden; white-space: nowrap; }
.sorted { padding-right: 18px; }
.sorted svg { position: absolute; right: 6px; top: 4px; width: 12px; height: 10px; }
td {
  height: 19px;
  padding: 1px 0 0 2px;
  line-height: 17px;
  border-right: 1px solid var(--rule);
  border-bottom: 1px solid var(--rule);
  white-space: nowrap;
  overflow: hidden;
}
td svg { display: inline-block; width: 17px; height: 16px; vertical-align: top; }

.list {
  display: flex;
  margin: 0 5px 0 1px;
  border: 1px solid;
  border-color: var(--mid) #e8e6e0 #e8e6e0 var(--mid);
  box-shadow: inset 1px 1px var(--dark);
  padding: 1px 0 0 1px;
}
.goods { flex: 1; width: 0; background: var(--list); }
.goods td:first-child { padding-left: 1px; }
.goods td + td { padding: 0 0 4px 4px; line-height: 14px; border-right: 0; }
.sel td { background: #9cabb2; }
.goods .sel td:first-child {
  background: linear-gradient(var(--list), var(--list)) 0 0 / 16px 100% no-repeat, linear-gradient(#000 1px, #8aa0aa 1px);
}
.reports { display: flex; justify-content: flex-end; align-items: center; gap: 14px; padding: 4px 11px 0 0; }
.reports .ico { gap: 3px; }
.dot { width: 2px; height: 2px; background: var(--dark); margin-right: -7px; }

/* right panel */
.right { display: flex; flex-direction: column; min-width: 0; }
.tools { display: flex; align-items: center; height: 42px; gap: 9px; padding: 2px 0 0 4px; }
.f10 { gap: 8px; font-weight: bold; font-style: italic; }
.stock {
  height: 415px;
  display: flex;
  flex-direction: column;
  padding: 2px 2px 1px 2px;
  border: 1px solid;
  border-color: var(--mid) #e8e6e0 #e8e6e0 var(--mid);
  box-shadow: inset 1px 1px var(--dark);
  margin-right: 1px;
}
.stock-body { flex: 1; background: var(--list); }
.stock td:first-child { padding-left: 1px; }
.stock .sel td:first-child {
  background: linear-gradient(var(--list), var(--list)) 0 0 / 34px 100% no-repeat, linear-gradient(#000 1px, #8aa0aa 1px);
}
.stock .sel .date { background: #b8c9cf; }
.stock .red { color: #f00; }

.order { flex: 1; display: flex; flex-direction: column; padding: 13px 9px 9px 10px; }
.order-bar { display: flex; gap: 5px; margin-bottom: 7px; }
.marked {
  position: relative;
  height: 44px;
  display: flex;
  align-items: center;
  justify-content: center;
  border: 3px solid #f00;
}
.grow { flex: 1; gap: 13px; padding-right: 2px; margin-right: 9px; }
.add { width: 47px; border-color: #ed1c24; }
.ok { width: 51px; }
.num { font: 16px/16px "Noto Sans", sans-serif; color: #ed1c24; }
.marked .num { position: absolute; top: -19px; left: 0; right: 0; text-align: center; }
.grow .num { padding-right: 8px; }
.order-list { flex: 1; background: #fff; border: 3px solid #f00; }
.order-list th { height: 20px; }
.order-list td:first-child { padding-left: 0; }
.order-list .focus td:first-child {
  background: linear-gradient(#000, #000) 17px 0 / 100% 1px no-repeat;
}
.order-list .big { display: block; margin-top: 106px; padding-right: 126px; text-align: center; }

.w338 { width: 338px; } .w254 { width: 254px; } .w83 { width: 83px; } .w81 { width: 81px; }
.w55 { width: 55px; } .w61 { width: 61px; } .w106 { width: 106px; } .w77 { width: 77px; }
.w44 { width: 44px; } .w89 { width: 89px; } .w125 { width: 125px; } .w132 { width: 132px; }
.w4 { width: 4px; } .w258 { width: 258px; } .w130 { width: 130px; } .w65 { width: 65px; }

/* status bar */
footer { height: 24px; display: flex; align-items: center; gap: 12px; white-space: nowrap; }
.service { margin-left: auto; display: flex; align-items: center; gap: 10px; }
.service b { color: #ff3030; }
.service svg + svg { margin-left: 4px; }
.service em { font-style: normal; color: #0a7a0a; }
```
